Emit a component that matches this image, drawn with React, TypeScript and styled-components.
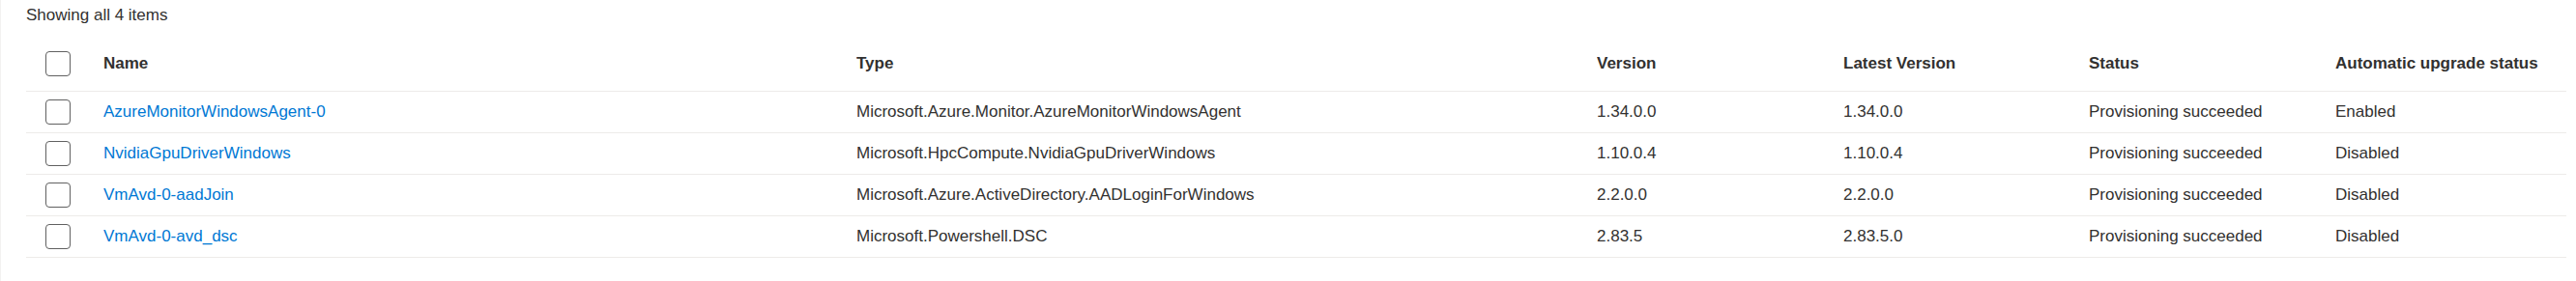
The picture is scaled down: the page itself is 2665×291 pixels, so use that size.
import React from "react";
import styled, { createGlobalStyle } from "styled-components";

const GlobalStyle = createGlobalStyle`
  html, body {
    margin: 0;
    padding: 0;
    background: #ffffff;
  }
  body {
    font-family: "Liberation Sans", Arial, sans-serif;
    color: #323130;
  }
`;

type Extension = {
  name: string;
  type: string;
  version: string;
  latest: string;
  status: string;
  upgrade: string;
};

const extensions: Extension[] = [
  {
    name: "AzureMonitorWindowsAgent-0",
    type: "Microsoft.Azure.Monitor.AzureMonitorWindowsAgent",
    version: "1.34.0.0",
    latest: "1.34.0.0",
    status: "Provisioning succeeded",
    upgrade: "Enabled",
  },
  {
    name: "NvidiaGpuDriverWindows",
    type: "Microsoft.HpcCompute.NvidiaGpuDriverWindows",
    version: "1.10.0.4",
    latest: "1.10.0.4",
    status: "Provisioning succeeded",
    upgrade: "Disabled",
  },
  {
    name: "VmAvd-0-aadJoin",
    type: "Microsoft.Azure.ActiveDirectory.AADLoginForWindows",
    version: "2.2.0.0",
    latest: "2.2.0.0",
    status: "Provisioning succeeded",
    upgrade: "Disabled",
  },
  {
    name: "VmAvd-0-avd_dsc",
    type: "Microsoft.Powershell.DSC",
    version: "2.83.5",
    latest: "2.83.5.0",
    status: "Provisioning succeeded",
    upgrade: "Disabled",
  },
];

const Page = styled.div`
  height: 291px;
  box-sizing: border-box;
  border-left: 1px solid #f3f2f1;
  padding-left: 26px;
  font-size: 17px;
`;

const Summary = styled.div`
  padding-top: 6px;
  line-height: 20px;
  height: 26px;
  box-sizing: border-box;
`;

const Grid = styled.div`
  width: 2628px;
  margin-top: 12px;
`;

const Row = styled.div<{ $header?: boolean }>`
  display: grid;
  grid-template-columns: 80px 779px 766px 255px 254px 255px 1fr;
  align-items: center;
  height: ${(p) => (p.$header ? "56px" : "42px")};
  border-bottom: 1px solid #edebe9;
  font-weight: ${(p) => (p.$header ? 700 : 400)};
`;

const Cell = styled.div`
  white-space: nowrap;
  overflow: hidden;
`;

const CheckCell = styled.div`
  display: flex;
  align-items: center;
  padding-left: 20px;
`;

const CheckBox = styled.span`
  display: block;
  width: 26px;
  height: 26px;
  box-sizing: border-box;
  border: 1.5px solid #616161;
  border-radius: 4px;
  background: #fff;
`;

const NameLink = styled.a`
  color: #0078d4;
  text-decoration: none;
  cursor: pointer;
`;

const App: React.FC = () => {
  return (
    <>
      <GlobalStyle />
      <Page>
        <Summary>Showing all 4 items</Summary>
        <Grid>
          <Row $header>
            <CheckCell>
              <CheckBox />
            </CheckCell>
            <Cell>Name</Cell>
            <Cell>Type</Cell>
            <Cell>Version</Cell>
            <Cell>Latest Version</Cell>
            <Cell>Status</Cell>
            <Cell>Automatic upgrade status</Cell>
          </Row>
          {extensions.map((ext) => (
            <Row key={ext.name}>
              <CheckCell>
                <CheckBox />
              </CheckCell>
              <Cell>
                <NameLink>{ext.name}</NameLink>
              </Cell>
              <Cell>{ext.type}</Cell>
              <Cell>{ext.version}</Cell>
              <Cell>{ext.latest}</Cell>
              <Cell>{ext.status}</Cell>
              <Cell>{ext.upgrade}</Cell>
            </Row>
          ))}
        </Grid>
      </Page>
    </>
  );
};

export default App;
